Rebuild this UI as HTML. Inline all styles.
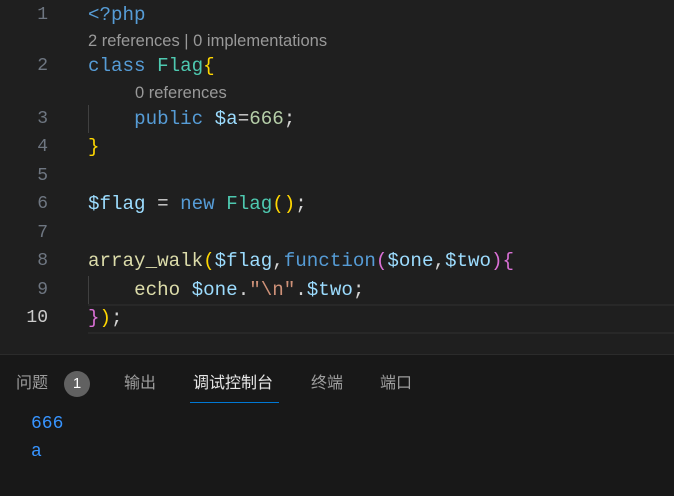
<!DOCTYPE html>
<html><head><meta charset="utf-8"><style>
body{margin:0;width:674px;height:496px;background:#1f1f1f;overflow:hidden;position:relative;font-family:"Liberation Mono",monospace}
.l{position:absolute;left:0;right:0;height:28px;line-height:28px;font-size:19.2px;white-space:pre}
.n{position:absolute;left:0;width:48px;text-align:right;color:#6e7681;font-size:18px}
.c{position:absolute;left:88px;color:#d4d4d4}
.lens{position:absolute;font-family:"Liberation Sans",sans-serif;font-size:16.5px;color:#999;height:22px;line-height:22px}
.k{color:#569cd6}.t{color:#4ec9b0}.y{color:#ffd700}.num{color:#b5cea8}.v{color:#9cdcfe}.f{color:#dcdcaa}.p{color:#da70d6}.s{color:#ce9178}
.guide{position:absolute;left:88px;width:1px;background:#404040}
.tab{position:absolute;top:372px;font-family:"Liberation Sans","Noto Sans CJK SC",sans-serif;font-size:16px;color:#9d9d9d;line-height:24px}
</style></head><body>
<div class="l" style="top:1px"><span class="n">1</span><span class="c k">&lt;?php</span></div>
<div class="lens" style="top:30px;left:88px">2 references | 0 implementations</div>
<div class="l" style="top:52px"><span class="n">2</span><span class="c"><span class="k">class</span> <span class="t">Flag</span><span class="y">{</span></span></div>
<div class="lens" style="top:82px;left:135px">0 references</div>
<div class="guide" style="top:105px;height:28px"></div>
<div class="l" style="top:105px"><span class="n">3</span><span class="c">    <span class="k">public</span> <span class="v">$a</span>=<span class="num">666</span>;</span></div>
<div class="l" style="top:133px"><span class="n">4</span><span class="c y">}</span></div>
<div class="l" style="top:162px"><span class="n">5</span></div>
<div class="l" style="top:190px"><span class="n">6</span><span class="c"><span class="v">$flag</span> = <span class="k">new</span> <span class="t">Flag</span><span class="y">()</span>;</span></div>
<div class="l" style="top:219px"><span class="n">7</span></div>
<div class="l" style="top:247px"><span class="n">8</span><span class="c"><span class="f">array_walk</span><span class="y">(</span><span class="v">$flag</span>,<span class="k">function</span><span class="p">(</span><span class="v">$one</span>,<span class="v">$two</span><span class="p">){</span></span></div>
<div class="guide" style="top:276px;height:28px"></div>
<div class="l" style="top:276px"><span class="n">9</span><span class="c">    <span class="f">echo</span> <span class="v">$one</span>.<span class="s">"\n"</span>.<span class="v">$two</span>;</span></div>
<div style="position:absolute;left:88px;right:0;top:304px;height:26px;border-top:2px solid #282828;border-bottom:2px solid #282828"></div>
<div class="l" style="top:304px"><span class="n" style="color:#ccc">10</span><span class="c"><span class="p">}</span><span class="y">)</span>;</span></div>
<div style="position:absolute;left:0;right:0;top:354px;bottom:0;background:#181818;border-top:1px solid #2b2b2b"></div>
<div class="tab" style="left:16px">问题</div>
<div style="position:absolute;left:64px;top:371px;width:26px;height:26px;border-radius:13px;background:#616161;color:#fff;font-family:'Liberation Sans',sans-serif;font-size:15px;text-align:center;line-height:26px">1</div>
<div class="tab" style="left:124px">输出</div>
<div class="tab" style="left:193px;color:#e7e7e7">调试控制台</div>
<div style="position:absolute;left:190px;width:89px;top:402px;height:1px;background:#0078d4"></div>
<div class="tab" style="left:311px">终端</div>
<div class="tab" style="left:380px">端口</div>
<div style="position:absolute;left:31px;top:412px;color:#3794ff;font-size:18px;line-height:24px">666</div>
<div style="position:absolute;left:31px;top:440px;color:#3794ff;font-size:18px;line-height:24px">a</div>
</body></html>
